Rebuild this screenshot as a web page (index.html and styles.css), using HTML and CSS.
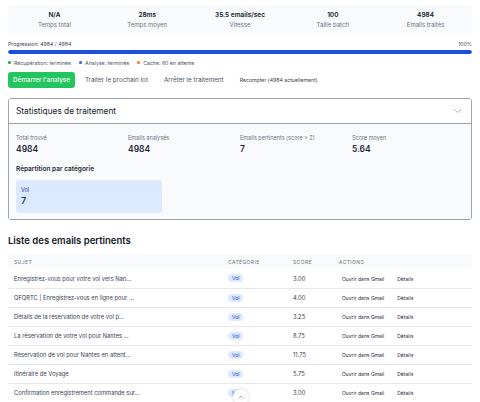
FILE: index.html
```html
<!DOCTYPE html>
<html>
  <head>
    <meta charset="UTF-8">
    <title>Analyse des emails</title>
    <link rel="stylesheet" href="styles.css">
  </head>
  <body>
    <main>
      <div class="metrics">
        <div class="metric"><b>N/A</b><span>Temps total</span></div>
        <div class="metric"><b>28ms</b><span>Temps moyen</span></div>
        <div class="metric"><b>35.5 emails/sec</b><span>Vitesse</span></div>
        <div class="metric"><b>100</b><span>Taille batch</span></div>
        <div class="metric"><b>4984</b><span>Emails traités</span></div>
      </div>

      <div class="progress-head">
        <span>Progression: 4984 / 4984</span>
        <span>100%</span>
      </div>
      <div class="progress"><div class="progress-fill" style="width: 100%"></div></div>

      <div class="legend">
        <span><i class="dot green"></i>Récupération: terminée</span>
        <span><i class="dot blue"></i>Analyse: terminée</span>
        <span><i class="dot orange"></i>Cache: 60 en attente</span>
      </div>

      <div class="actions">
        <button class="btn primary">Démarrer l'analyse</button>
        <button class="btn">Traiter le prochain lot</button>
        <button class="btn">Arrêter le traitement</button>
        <button class="btn small">Recompter (4984 actuellement)</button>
      </div>

      <section class="card">
        <div class="card-head">
          <h2>Statistiques de traitement</h2>
          <svg width="9" height="6" viewBox="0 0 9 6"><path d="M1 1l3.5 3.5L8 1" fill="none" stroke="#9ca3af" stroke-width="0.8"/></svg>
        </div>
        <div class="card-body">
          <div class="stats">
            <div class="stat"><span>Total trouvé</span><b>4984</b></div>
            <div class="stat"><span>Emails analysés</span><b>4984</b></div>
            <div class="stat"><span>Emails pertinents (score &gt; 2)</span><b>7</b></div>
            <div class="stat"><span>Score moyen</span><b>5.64</b></div>
          </div>
          <h3>Répartition par catégorie</h3>
          <div class="cats">
            <div class="cat"><span>Vol</span><b>7</b></div>
          </div>
        </div>
      </section>

      <h2 class="list-title">Liste des emails pertinents</h2>
      <table class="emails">
        <thead>
          <tr><th>Sujet</th><th>Catégorie</th><th>Score</th><th>Actions</th></tr>
        </thead>
        <tbody>
          <tr><td>Enregistrez-vous pour votre vol vers Nan...</td><td><span class="badge">Vol</span></td><td>3.00</td><td class="links"><a>Ouvrir dans Gmail</a><a>Détails</a></td></tr>
          <tr><td>QFQRTC | Enregistrez-vous en ligne pour ...</td><td><span class="badge">Vol</span></td><td>4.00</td><td class="links"><a>Ouvrir dans Gmail</a><a>Détails</a></td></tr>
          <tr><td>Détails de la réservation de votre vol p...</td><td><span class="badge">Vol</span></td><td>3.25</td><td class="links"><a>Ouvrir dans Gmail</a><a>Détails</a></td></tr>
          <tr><td>La réservation de votre vol pour Nantes ...</td><td><span class="badge">Vol</span></td><td>8.75</td><td class="links"><a>Ouvrir dans Gmail</a><a>Détails</a></td></tr>
          <tr><td>Réservation de vol pour Nantes en attent...</td><td><span class="badge">Vol</span></td><td>11.75</td><td class="links"><a>Ouvrir dans Gmail</a><a>Détails</a></td></tr>
          <tr><td>Itinéraire de Voyage</td><td><span class="badge">Vol</span></td><td>5.75</td><td class="links"><a>Ouvrir dans Gmail</a><a>Détails</a></td></tr>
          <tr><td>Confirmation enregistrement commande sur...</td><td><span class="badge">Vol</span></td><td>3.00</td><td class="links"><a>Ouvrir dans Gmail</a><a>Détails</a></td></tr>
        </tbody>
      </table>
    </main>
    <div class="float-btn">
      <svg width="8" height="8" viewBox="0 0 8 8"><path d="M1.5 5.5L4 3l2.5 2.5" fill="none" stroke="#9ca3af" stroke-width="0.8"/></svg>
    </div>
  </body>
</html>
```

FILE: styles.css
```css
*{
  box-sizing: border-box;
}
html, body{
  margin: 0;
  padding: 0;
  background: #fff;
}
body{
  font-family: Inter, "Liberation Sans", sans-serif;
  color: #1f2937;
  overflow: hidden;
  height: 402px;
}
main{
  padding: 5px 8px 0 8px;
}
.metrics{
  display: grid;
  grid-template-columns: repeat(5, 1fr);
  background: #f8fafc;
  border-radius: 3px;
  padding: 6px 0 5px;
}
.metric{
  display: flex;
  flex-flow: column;
  align-items: center;
  gap: 2px;
}
.metric b{
  font-size: 6.5px;
  font-weight: 600;
  color: #111827;
}
.metric span{
  font-size: 6px;
  color: #6b7280;
}
.progress-head{
  display: flex;
  justify-content: space-between;
  font-size: 5.2px;
  color: #374151;
  margin-top: 8px;
}
.progress{
  height: 4px;
  background: #e5e7eb;
  border-radius: 3px;
  margin-top: 3px;
  overflow: hidden;
}
.progress-fill{
  height: 100%;
  background: #1d4ed8;
  border-radius: 3px;
}
.legend{
  display: flex;
  gap: 8px;
  font-size: 5.2px;
  color: #4b5563;
  margin-top: 6px;
}
.dot{
  display: inline-block;
  width: 3px;
  height: 3px;
  border-radius: 50%;
  margin-right: 3px;
  vertical-align: 1px;
}
.dot.green{ background: #16a34a; }
.dot.blue{ background: #2563eb; }
.dot.orange{ background: #f97316; }
.actions{
  display: flex;
  align-items: center;
  gap: 4px;
  margin-top: 6px;
}
.btn{
  font-family: inherit;
  font-size: 6.3px;
  color: #4b5563;
  background: none;
  border: 0;
  border-radius: 3px;
  padding: 0 6px;
  height: 16px;
}
.btn.primary{
  background: #22c55e;
  color: #fff;
  font-weight: 500;
  padding: 0 5px;
}
.btn.small{
  font-size: 5.2px;
  color: #374151;
}
.card{
  margin-top: 10px;
  border: 1px solid #9ca3af;
  border-radius: 3px;
  overflow: hidden;
}
.card-head{
  display: flex;
  justify-content: space-between;
  align-items: center;
  background: #fff;
  padding: 0 9px 0 7px;
  height: 25px;
  border-bottom: 1px solid #9ca3af;
}
.card-head h2{
  margin: 0;
  font-size: 8.3px;
  font-weight: 400;
  color: #111827;
}
.card-body{
  background: #f8fafc;
  padding: 11px 7px 6px;
}
.stats{
  display: grid;
  grid-template-columns: repeat(4, 1fr);
}
.stat{
  display: flex;
  flex-flow: column;
  gap: 3px;
}
.stat span{
  font-size: 5.5px;
  color: #6b7280;
}
.stat b{
  font-size: 8.5px;
  font-weight: 600;
  color: #1f2937;
}
.card-body h3{
  margin: 11px 0 7px;
  font-size: 6.5px;
  font-weight: 600;
  color: #1f2937;
}
.cats{
  display: grid;
  grid-template-columns: repeat(3, 1fr);
}
.cat{
  display: flex;
  flex-flow: column;
  gap: 2px;
  background: #dbeafe;
  border-radius: 3px;
  padding: 7px 5px 6px;
  height: 33px;
  width: 146px;
}
.cat span{
  font-size: 5.5px;
  color: #1e40af;
}
.cat b{
  font-size: 9px;
  font-weight: 600;
  color: #1e3a8a;
}
.list-title{
  margin: 15px 0 8px;
  font-size: 9.5px;
  font-weight: 600;
  color: #111827;
}
.emails{
  width: 100%;
  border-collapse: collapse;
}
.emails th{
  background: #f9fafb;
  text-align: left;
  font-size: 5px;
  font-weight: 400;
  letter-spacing: 0.4px;
  text-transform: uppercase;
  color: #6b7280;
  height: 15px;
  padding: 0 6px;
}
.emails th:nth-child(1){ width: 214px; }
.emails th:nth-child(2){ width: 65px; padding-left: 6px; }
.emails th:nth-child(3){ width: 46px; }
.emails td{
  font-size: 5.8px;
  color: #374151;
  height: 19px;
  padding: 0 6px;
  border-bottom: 1px solid #e5e7eb;
  white-space: nowrap;
}
.badge{
  display: inline-block;
  background: #dbeafe;
  color: #1e40af;
  font-size: 5px;
  border-radius: 6px;
  padding: 1px 4px;
}
.links a{
  font-size: 5px;
  color: #1f2937;
  margin-right: 13px;
}
.links a:first-child{
  margin-left: 3px;
}
.float-btn{
  position: absolute;
  left: 233px;
  top: 389px;
  width: 16px;
  height: 16px;
  border-radius: 50%;
  background: #fff;
  box-shadow: 0 0 3px rgba(0,0,0,0.2);
  display: flex;
  align-items: center;
  justify-content: center;
}
```
